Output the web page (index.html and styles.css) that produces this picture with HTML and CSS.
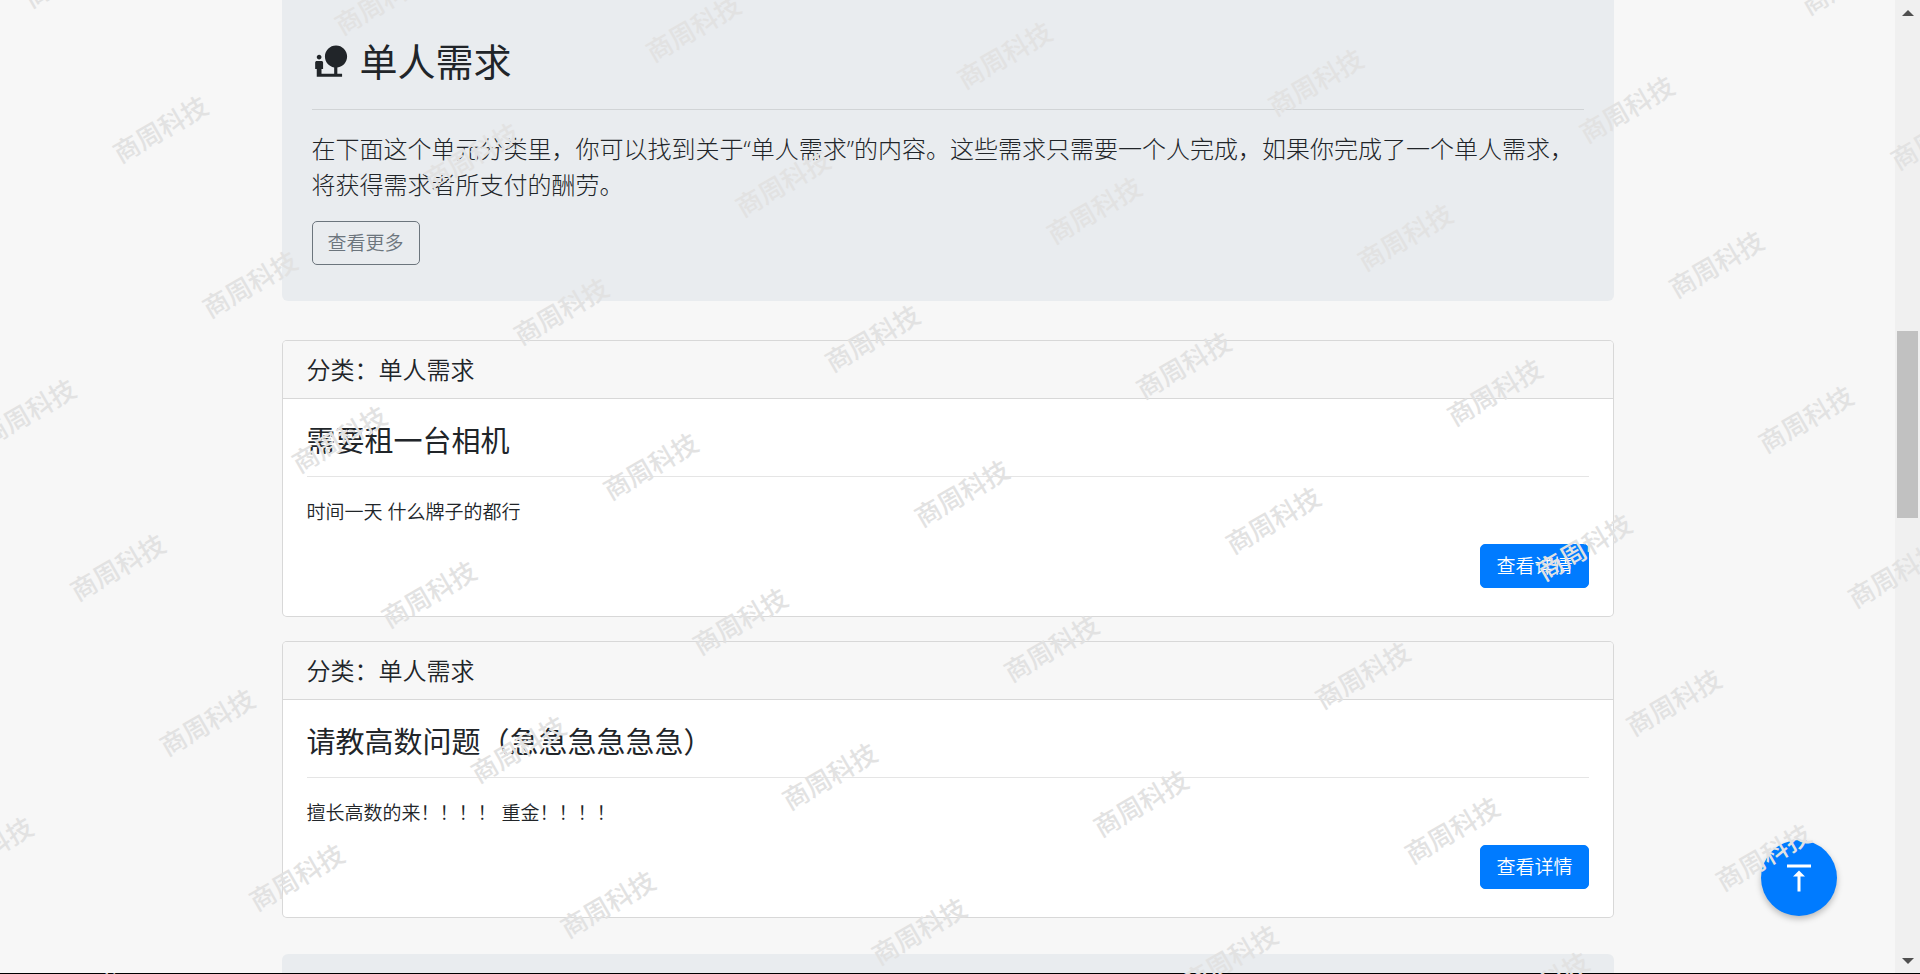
FILE: index.html
```html
<!DOCTYPE html>
<html lang="zh-CN">
<head>
<meta charset="utf-8">
<meta name="viewport" content="width=device-width, initial-scale=1">
<title>单人需求</title>
<link rel="stylesheet" href="styles.css">
</head>
<body>
<div class="app">
  <main class="page">
    <div class="container">
      <section class="jumbotron">
        <h1 class="jumbotron-title">
          <svg class="title-icon" viewBox="0 0 24 24" aria-hidden="true"><path d="M22.17 9.17c0-3.87-3.13-7-7-7s-7 3.13-7 7c0 3.47 2.52 6.34 5.83 6.89V20H6v-3h1v-4c0-.55-.45-1-1-1H3c-.55 0-1 .45-1 1v4h1v5h16v-2h-3v-3.88c3.47-.41 6.17-3.36 6.17-6.95zM4.5 11c.83 0 1.5-.67 1.5-1.5S5.33 8 4.5 8 3 8.67 3 9.5 3.67 11 4.5 11z"/></svg>
          单人需求
        </h1>
        <hr class="rule rule-wide">
        <p class="lead">在下面这个单元分类里，你可以找到关于“单人需求”的内容。这些需求只需要一个人完成，如果你完成了一个单人需求，将获得需求者所支付的酬劳。</p>
        <a class="btn btn-outline" href="#more">查看更多</a>
      </section>

      <article class="card">
        <header class="card-header">分类：单人需求</header>
        <div class="card-body">
          <h2 class="card-title">需要租一台相机</h2>
          <hr class="rule">
          <p class="card-text">时间一天 什么牌子的都行</p>
          <div class="card-actions"><a class="btn btn-primary" href="#detail-1">查看详情</a></div>
        </div>
      </article>

      <article class="card">
        <header class="card-header">分类：单人需求</header>
        <div class="card-body">
          <h2 class="card-title">请教高数问题（急急急急急急）</h2>
          <hr class="rule">
          <p class="card-text">擅长高数的来！！！！ 重金！！！！</p>
          <div class="card-actions"><a class="btn btn-primary" href="#detail-2">查看详情</a></div>
        </div>
      </article>

      <section class="jumbotron jumbotron-next"></section>
    </div>
  </main>

  <div class="scrollbar" aria-hidden="true">
    <svg class="scroll-arrow" viewBox="0 0 12 6"><path d="M0 6L6 0L12 6Z"/></svg>
    <div class="scroll-track">
      <div class="scroll-before"></div>
      <div class="scroll-thumb"></div>
      <div class="scroll-after"></div>
    </div>
    <svg class="scroll-arrow" viewBox="0 0 12 6"><path d="M0 0L6 6L12 0Z"/></svg>
  </div>

  <div class="bottom-line"></div>

  <button class="to-top" type="button" aria-label="返回顶部">
    <svg class="to-top-icon" viewBox="0 0 24 24" aria-hidden="true"><path d="M8 11h3v10h2V11h3l-4-4-4 4zM4 3v2h16V3H4z"/></svg>
  </button>

  <div class="watermark" aria-hidden="true"><div class="watermark-grid" id="watermark"></div></div>
</div>
<script src="script.js"></script>
</body>
</html>
```

FILE: styles.css
```css
*, *::before, *::after { box-sizing: border-box; }

body {
  margin: 0;
  background: #f7f7f7;
  color: #212529;
  font-family: "Open Sans", "Noto Sans CJK SC", sans-serif;
  font-size: 19px;
  font-weight: 350;
  line-height: 29px;
}

.app {
  position: relative;
  display: grid;
  grid-template-columns: 1fr 25px;
  grid-template-rows: minmax(0, 1fr) 1px;
  height: 100vh;
  overflow: hidden;
}

.bottom-line {
  grid-column: 1 / -1;
  background: #000;
}

.page { min-width: 0; min-height: 0; overflow: hidden; }

.container {
  max-width: 1332px;
  margin: 0 auto;
}

.jumbotron {
  margin-bottom: 39px;
  padding: 38px 30px 36px;
  background: #e9ecef;
  border-radius: 0 0 6px 6px;
}

.jumbotron-next {
  margin: 36px 0 0;
  border-radius: 6px;
}

.jumbotron-title {
  display: flex;
  align-items: center;
  gap: 10px;
  margin: 0 0 25px;
  font-size: 38px;
  font-weight: 400;
  line-height: 46px;
}

.title-icon { width: 38px; height: 38px; fill: currentColor; }

.rule {
  height: 1px;
  margin: 18px 0 21px;
  border: 0;
  background: rgba(0, 0, 0, .1);
}

.rule-wide { margin-bottom: 21px; }

.lead {
  margin: 0 0 18px;
  font-size: 24px;
  font-weight: 300;
  line-height: 36px;
}

.btn {
  display: inline-block;
  padding: 7px 15px 6px;
  border: 1px solid transparent;
  border-radius: 5px;
  text-decoration: none;
  vertical-align: top;
}

.btn-outline { border-color: #6c757d; color: #6c757d; }
.btn-primary { background: #007bff; border-color: #007bff; color: #fff; }

.card {
  margin-bottom: 24px;
  border: 1px solid rgba(0, 0, 0, .125);
  border-radius: 5px;
  background: #fff;
  background-clip: padding-box;
  overflow: hidden;
}

.card-header {
  padding: 14px 24px;
  border-bottom: 1px solid rgba(0, 0, 0, .125);
  background: #f7f7f7;
  font-size: 24px;
}

.card-body { padding: 24px 24px 28px; }

.card-title {
  margin: 0;
  font-size: 29px;
  font-weight: 400;
  line-height: 35px;
}

.card-text { margin: 0 0 17px; }

.card-actions { display: flex; justify-content: flex-end; }

.scrollbar {
  display: flex;
  flex-direction: column;
  align-items: center;
  padding: 10px 0 9px;
  background: #f0f0f0;
}

.scroll-arrow { width: 12px; height: 6px; fill: #505050; }

.scroll-track {
  flex: 1;
  display: flex;
  flex-direction: column;
  width: 21px;
}

.scroll-before { flex: 315; }
.scroll-thumb { flex: 187; background: #c1c1c1; }
.scroll-after { flex: 440; }

.to-top {
  position: absolute;
  right: 83px;
  bottom: 58px;
  display: grid;
  place-items: center;
  width: 76px;
  height: 76px;
  padding: 0;
  border: 0;
  border-radius: 50%;
  background: #007bff;
  box-shadow: 0 3px 6px rgba(0, 0, 0, .25);
}

.to-top-icon { width: 36px; height: 36px; fill: #fff; }

/* Tiled stamps laid out straight, then turned as one sheet over the page. */
.watermark {
  position: absolute;
  inset: 0;
  display: grid;
  place-content: center;
  padding: 12px 0 0 4px;
  overflow: hidden;
  pointer-events: none;
}

.watermark-grid {
  display: grid;
  grid-template-columns: repeat(9, 256px);
  grid-auto-rows: 179px;
  place-items: center;
  transform: rotate(-30deg);
  color: #e2e2e2;
  font-size: 26px;
  font-weight: 500;
}
```

FILE: script.js
```js
const sheet = document.getElementById("watermark");
for (let i = 0; i < 9 * 13; i++) {
  const stamp = document.createElement("span");
  stamp.textContent = "商周科技";
  sheet.appendChild(stamp);
}

// Empty the cells whose stamp lies wholly outside the window.
const offscreen = [...sheet.children].filter((stamp) => {
  const box = stamp.getBoundingClientRect();
  return box.right < 8 || box.bottom < 8 ||
    box.left > window.innerWidth - 8 || box.top > window.innerHeight - 4;
});
offscreen.forEach((stamp) => { stamp.textContent = ""; });
```
